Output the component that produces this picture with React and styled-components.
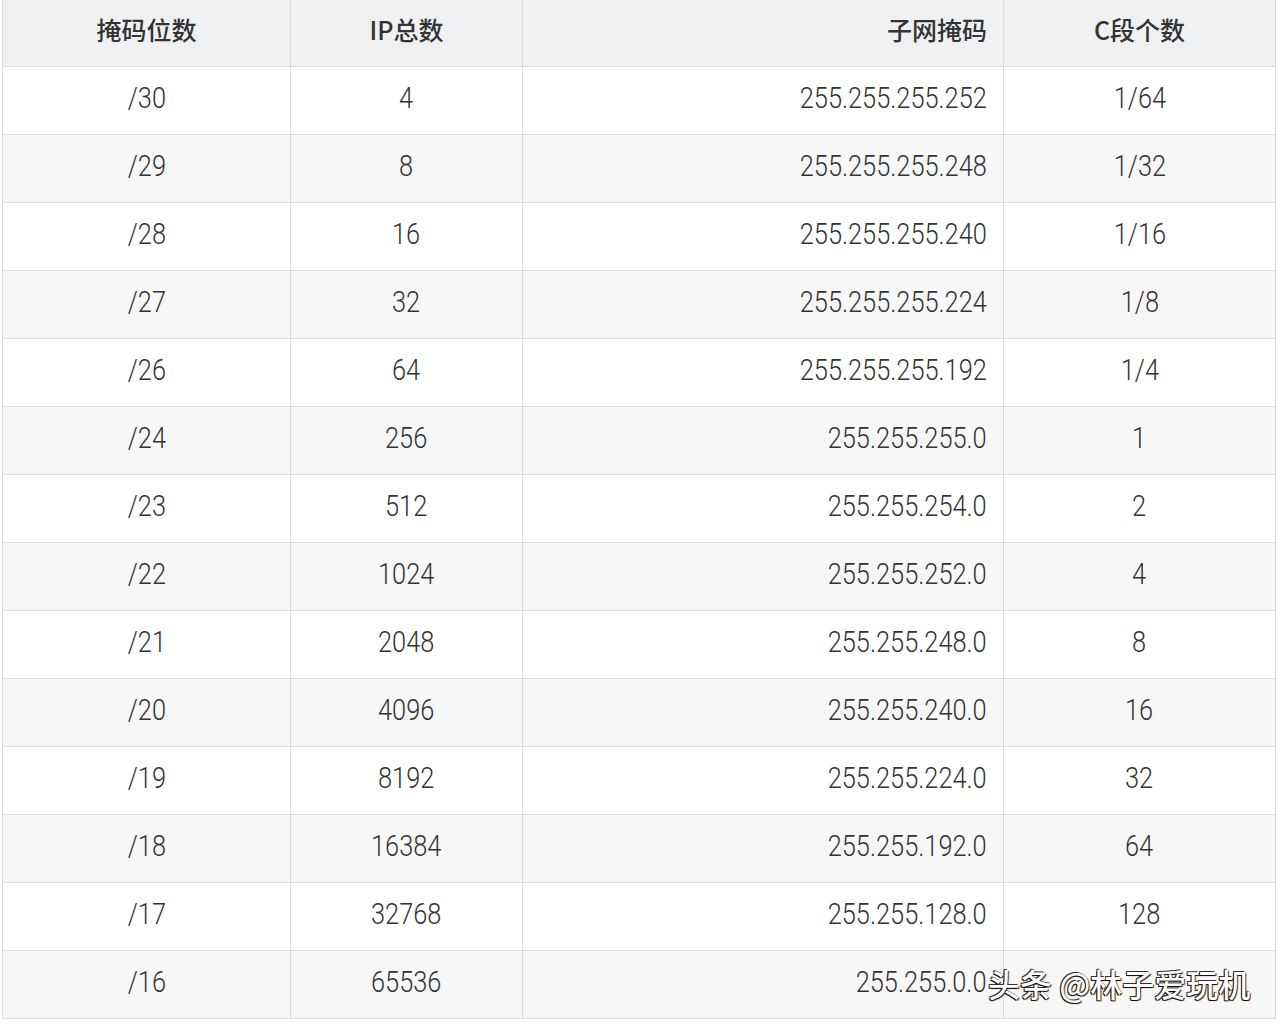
import styled, { createGlobalStyle } from "styled-components";

const rows = [
  ["/30", "4", "255.255.255.252", "1/64"],
  ["/29", "8", "255.255.255.248", "1/32"],
  ["/28", "16", "255.255.255.240", "1/16"],
  ["/27", "32", "255.255.255.224", "1/8"],
  ["/26", "64", "255.255.255.192", "1/4"],
  ["/24", "256", "255.255.255.0", "1"],
  ["/23", "512", "255.255.254.0", "2"],
  ["/22", "1024", "255.255.252.0", "4"],
  ["/21", "2048", "255.255.248.0", "8"],
  ["/20", "4096", "255.255.240.0", "16"],
  ["/19", "8192", "255.255.224.0", "32"],
  ["/18", "16384", "255.255.192.0", "64"],
  ["/17", "32768", "255.255.128.0", "128"],
  ["/16", "65536", "255.255.0.0", "1"],
];

const headers = ["掩码位数", "IP总数", "子网掩码", "C段个数"];
const widths = [288, 232, 481, 272];

export default function App() {
  return (
    <>
      <GlobalStyle />
      <Page>
        <Table>
          <colgroup>
            {widths.map((w, i) => (
              <col key={i} style={{ width: w }} />
            ))}
          </colgroup>
          <thead>
            <tr>
              {headers.map((h, i) => (
                <Th key={h} $right={i === 2}>
                  {h}
                </Th>
              ))}
            </tr>
          </thead>
          <tbody>
            {rows.map((r, ri) => (
              <Row key={r[0]} $even={ri % 2 === 1}>
                {r.map((c, ci) => (
                  <Td key={ci} $right={ci === 2}>
                    <Num $right={ci === 2}>{c}</Num>
                  </Td>
                ))}
              </Row>
            ))}
          </tbody>
        </Table>
        <Watermark>头条 @林子爱玩机</Watermark>
      </Page>
    </>
  );
}

const GlobalStyle = createGlobalStyle`
  body {
    margin: 0;
    background: #ffffff;
  }
`;

const Page = styled.div`
  position: relative;
  width: 1282px;
  height: 1030px;
  padding-left: 2px;
  box-sizing: border-box;
  overflow: hidden;
`;

const Table = styled.table`
  border-collapse: collapse;
  table-layout: fixed;
  width: 1273px;
  color: #333333;
`;

const Th = styled.th`
  height: 58px;
  padding: 0 16px 8px;
  line-height: 30px;
  background: #eff0f2;
  border: 1px solid #dcdcdc;
  border-top: none;
  font-family: "Noto Sans CJK SC", "Noto Sans", sans-serif;
  font-size: 25px;
  font-weight: 500;
  text-align: ${(p) => (p.$right ? "right" : "center")};
  color: #333333;
`;

const Row = styled.tr`
  background: ${(p) => (p.$even ? "#f7f7f7" : "#ffffff")};
`;

const Td = styled.td`
  height: 67px;
  padding: 0 16px;
  line-height: 30px;
  border: 1px solid #dcdcdc;
  text-align: ${(p) => (p.$right ? "right" : "center")};
  white-space: nowrap;
`;

const Num = styled.span`
  display: inline-block;
  font-family: Roboto, "Liberation Sans", sans-serif;
  font-weight: 300;
  font-size: 29px;
  color: #333333;
  transform: scaleX(0.875);
  transform-origin: ${(p) => (p.$right ? "right" : "center")} center;
`;

const Watermark = styled.div`
  position: absolute;
  left: 988px;
  top: 963px;
  font-family: "Noto Sans CJK SC", sans-serif;
  font-size: 32px;
  line-height: 40px;
  font-weight: 500;
  color: #ffffff;
  text-shadow: -1px 1px 0 #111, 1px 1px 1px #222, -1px -1px 0 #333;
  white-space: nowrap;
`;
